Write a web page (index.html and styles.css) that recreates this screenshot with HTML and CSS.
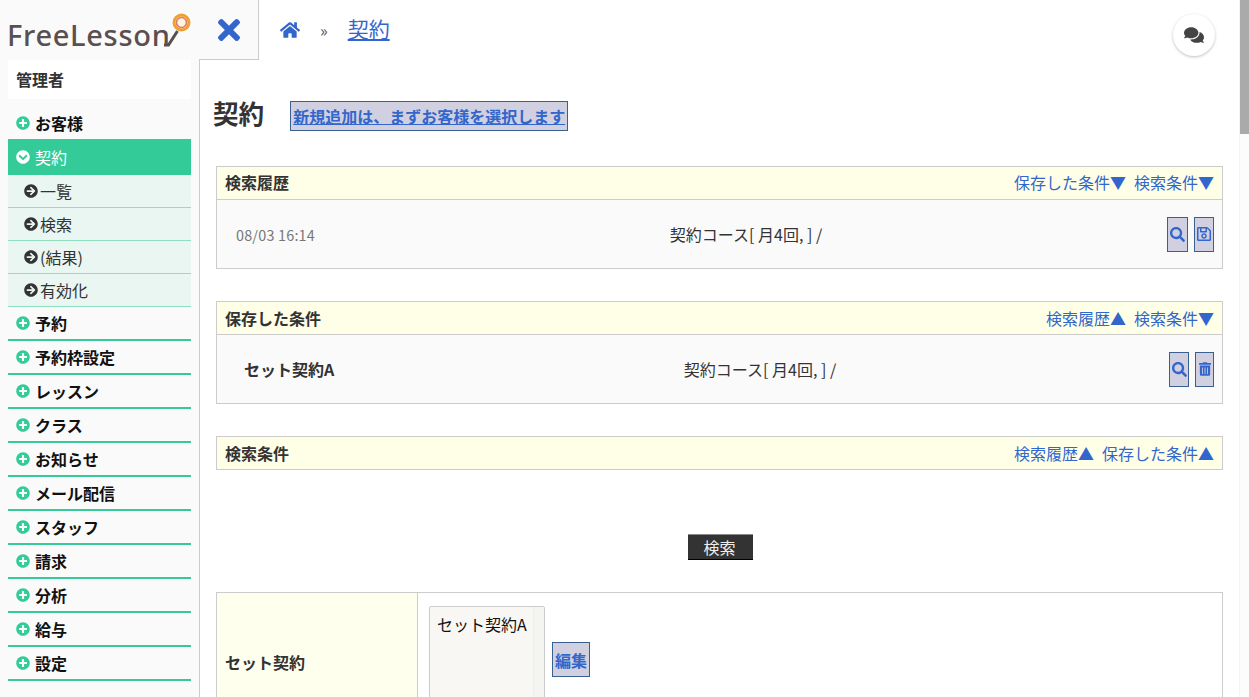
FILE: index.html
```html
<!DOCTYPE html>
<html lang="ja">
<head>
  <meta charset="UTF-8" />
  <title>FreeLesson 契約</title>
  <link rel="stylesheet" href="styles.css">
</head>
<body>
  <svg class="icon-defs" xmlns="http://www.w3.org/2000/svg">
    <symbol id="i-times" viewBox="0 0 352 512"><path d="M242.72 256l100.07-100.07c12.28-12.28 12.28-32.19 0-44.48l-22.24-22.24c-12.28-12.28-32.19-12.28-44.48 0L176 189.28 75.93 89.21c-12.28-12.28-32.19-12.28-44.48 0L9.21 111.45c-12.28 12.28-12.28 32.19 0 44.48L109.28 256 9.21 356.07c-12.28 12.28-12.28 32.19 0 44.48l22.24 22.24c12.28 12.28 32.2 12.28 44.48 0L176 322.72l100.07 100.07c12.28 12.28 32.2 12.28 44.48 0l22.24-22.24c12.28-12.28 12.28-32.19 0-44.48L242.72 256z"/></symbol>
    <symbol id="i-home" viewBox="0 0 576 512"><path d="M280.37 148.26L96 300.11V464a16 16 0 0 0 16 16l112.06-.29a16 16 0 0 0 15.92-16V368a16 16 0 0 1 16-16h64a16 16 0 0 1 16 16v95.64a16 16 0 0 0 16 16.05L464 480a16 16 0 0 0 16-16V300L295.67 148.26a12.19 12.19 0 0 0-15.3 0zM571.6 251.47L488 182.56V44.05a12 12 0 0 0-12-12h-56a12 12 0 0 0-12 12v72.61L318.47 43a48 48 0 0 0-61 0L4.34 251.47a12 12 0 0 0-1.6 16.9l25.5 31A12 12 0 0 0 45.15 301l235.22-193.74a12.19 12.19 0 0 1 15.3 0L530.9 301a12 12 0 0 0 16.9-1.6l25.5-31a12 12 0 0 0-1.7-16.93z"/></symbol>
    <symbol id="i-plus" viewBox="0 0 512 512"><path d="M256 8C119 8 8 119 8 256s111 248 248 248 248-111 248-248S393 8 256 8zm144 276c0 6.6-5.4 12-12 12h-92v92c0 6.6-5.4 12-12 12h-56c-6.6 0-12-5.4-12-12v-92h-92c-6.6 0-12-5.4-12-12v-56c0-6.6 5.4-12 12-12h92v-92c0-6.6 5.4-12 12-12h56c6.6 0 12 5.4 12 12v92h92c6.6 0 12 5.4 12 12v56z"/></symbol>
    <symbol id="i-down" viewBox="0 0 512 512"><path d="M504 256c0 137-111 248-248 248S8 393 8 256 119 8 256 8s248 111 248 248zM273 369.9l135.5-135.5c9.4-9.4 9.4-24.6 0-33.9l-17-17c-9.4-9.4-24.6-9.4-33.9 0L256 285.1 154.4 183.5c-9.4-9.4-24.6-9.4-33.9 0l-17 17c-9.4 9.4-9.4 24.6 0 33.9L239 369.9c9.4 9.4 24.6 9.4 34 0z"/></symbol>
    <symbol id="i-right" viewBox="0 0 512 512"><path d="M256 8c137 0 248 111 248 248S393 504 256 504 8 393 8 256 119 8 256 8zm-28.9 143.6l75.5 72.4H120c-13.3 0-24 10.7-24 24v16c0 13.3 10.7 24 24 24h182.6l-75.5 72.4c-9.7 9.3-9.9 24.8-.4 34.3l11 10.9c9.4 9.4 24.6 9.4 33.9 0L404.3 273c9.4-9.4 9.4-24.6 0-33.9L271.6 106.3c-9.4-9.4-24.6-9.4-33.9 0l-11 10.9c-9.5 9.6-9.3 25.1.4 34.4z"/></symbol>
    <symbol id="i-search" viewBox="0 0 512 512"><path d="M505 442.7L405.3 343c-4.5-4.5-10.6-7-17-7H372c27.6-35.3 44-79.7 44-128C416 93.1 322.9 0 208 0S0 93.1 0 208s93.1 208 208 208c48.3 0 92.7-16.4 128-44v16.3c0 6.4 2.5 12.5 7 17l99.7 99.7c9.4 9.4 24.6 9.4 33.9 0l28.3-28.3c9.4-9.4 9.4-24.6.1-34zM208 336c-70.7 0-128-57.2-128-128 0-70.7 57.2-128 128-128 70.7 0 128 57.2 128 128 0 70.7-57.2 128-128 128z"/></symbol>
    <symbol id="i-save" viewBox="0 0 448 512"><path d="M433.941 129.941l-83.882-83.882A48 48 0 0 0 316.118 32H48C21.49 32 0 53.49 0 80v352c0 26.51 21.49 48 48 48h352c26.51 0 48-21.49 48-48V163.882a48 48 0 0 0-14.059-33.941zM272 80v80H144V80h128zm122 352H54a6 6 0 0 1-6-6V86a6 6 0 0 1 6-6h42v104c0 13.255 10.745 24 24 24h176c13.255 0 24-10.745 24-24V83.882l78.243 78.243a6 6 0 0 1 1.757 4.243V426a6 6 0 0 1-6 6zM224 232c-48.523 0-88 39.477-88 88s39.477 88 88 88 88-39.477 88-88-39.477-88-88-88zm0 128c-22.056 0-40-17.944-40-40s17.944-40 40-40 40 17.944 40 40-17.944 40-40 40z"/></symbol>
    <symbol id="i-trash" viewBox="0 0 448 512"><path d="M32 464a48 48 0 0 0 48 48h288a48 48 0 0 0 48-48V128H32zm272-256a16 16 0 0 1 32 0v224a16 16 0 0 1-32 0zm-96 0a16 16 0 0 1 32 0v224a16 16 0 0 1-32 0zm-96 0a16 16 0 0 1 32 0v224a16 16 0 0 1-32 0zM432 32H312l-9.4-18.7A24 24 0 0 0 281.1 0H166.8a23.72 23.72 0 0 0-21.4 13.3L136 32H16A16 16 0 0 0 0 48v32a16 16 0 0 0 16 16h416a16 16 0 0 0 16-16V48a16 16 0 0 0-16-16z"/></symbol>
    <symbol id="i-comments" viewBox="0 0 576 512"><path d="M416 192c0-88.4-93.1-160-208-160S0 103.6 0 192c0 34.3 14.1 65.9 38 92-13.4 30.2-35.5 54.2-35.8 54.5-2.2 2.3-2.8 5.7-1.5 8.7S4.8 352 8 352c36.6 0 66.9-12.3 88.7-25 32.2 15.7 70.3 25 111.3 25 114.9 0 208-71.6 208-160zm122 220c23.9-26 38-57.7 38-92 0-66.9-53.5-124.2-129.3-148.1.9 6.6 1.3 13.3 1.3 20.1 0 105.9-107.7 192-240 192-10.8 0-21.3-.8-31.7-1.9C207.8 439.6 281.8 480 368 480c41 0 79.1-9.2 111.3-25 21.8 12.7 52.1 25 88.7 25 3.2 0 6.1-1.9 7.3-4.8 1.3-2.9.7-6.3-1.5-8.7-.3-.3-22.4-24.2-35.8-54.5z"/></symbol>
  </svg>

  <!-- Sidebar -->
  <aside class="sidebar">
    <div class="logo">
      <span class="logo-text">FreeLesson</span>
      <svg class="logo-mark" viewBox="0 0 40 40" width="40" height="40">
        <path d="M11 34 L15.5 34 L24.5 20" fill="none" stroke="#5a4f4f" stroke-width="3"/>
        <circle cx="28.5" cy="11.5" r="7.5" fill="#fdf0d8" stroke="#f0a030" stroke-width="3"/>
        <circle cx="28.5" cy="11.5" r="5" fill="#fdf3e0" stroke="#d97a6c" stroke-width="1.6"/>
      </svg>
    </div>
    <div class="side-body">
      <div class="user-box">管理者</div>
      <ul class="menu">
        <li class="menu-item"><svg class="menu-icon"><use href="#i-plus"/></svg>お客様</li>
        <li class="menu-item active"><svg class="menu-icon"><use href="#i-down"/></svg>契約</li>
        <li class="sub-item"><svg class="sub-icon"><use href="#i-right"/></svg>一覧</li>
        <li class="sub-item"><svg class="sub-icon"><use href="#i-right"/></svg>検索</li>
        <li class="sub-item"><svg class="sub-icon"><use href="#i-right"/></svg>(結果)</li>
        <li class="sub-item"><svg class="sub-icon"><use href="#i-right"/></svg>有効化</li>
        <li class="menu-item"><svg class="menu-icon"><use href="#i-plus"/></svg>予約</li>
        <li class="menu-item"><svg class="menu-icon"><use href="#i-plus"/></svg>予約枠設定</li>
        <li class="menu-item"><svg class="menu-icon"><use href="#i-plus"/></svg>レッスン</li>
        <li class="menu-item"><svg class="menu-icon"><use href="#i-plus"/></svg>クラス</li>
        <li class="menu-item"><svg class="menu-icon"><use href="#i-plus"/></svg>お知らせ</li>
        <li class="menu-item"><svg class="menu-icon"><use href="#i-plus"/></svg>メール配信</li>
        <li class="menu-item"><svg class="menu-icon"><use href="#i-plus"/></svg>スタッフ</li>
        <li class="menu-item"><svg class="menu-icon"><use href="#i-plus"/></svg>請求</li>
        <li class="menu-item"><svg class="menu-icon"><use href="#i-plus"/></svg>分析</li>
        <li class="menu-item"><svg class="menu-icon"><use href="#i-plus"/></svg>給与</li>
        <li class="menu-item"><svg class="menu-icon"><use href="#i-plus"/></svg>設定</li>
      </ul>
    </div>
  </aside>

  <!-- Main -->
  <main class="main">
    <div class="topbar">
      <div class="toggle"><svg class="toggle-icon"><use href="#i-times"/></svg></div>
      <svg class="home-icon"><use href="#i-home"/></svg>
      <span class="crumb-sep">»</span>
      <a class="crumb-link" href="#">契約</a>
      <div class="chat-btn"><svg class="chat-icon"><use href="#i-comments"/></svg></div>
    </div>

    <div class="content">
      <div class="title-row">
        <h1>契約</h1>
        <a class="btn btn-new" href="#">新規追加は、まずお客様を選択します</a>
      </div>

      <section class="panel panel-first">
        <div class="panel-head">
          <span class="panel-title">検索履歴</span>
          <a href="#">保存した条件▼</a>
          <a href="#">検索条件▼</a>
        </div>
        <div class="panel-row">
          <span class="history-date">08/03 16:14</span>
          <span class="row-text">契約コース[ 月4回, ] /</span>
          <div class="row-actions history-actions">
            <a class="btn btn-icon btn-wide" href="#"><svg class="search-icon"><use href="#i-search"/></svg></a>
            <a class="btn btn-icon" href="#"><svg class="save-icon"><use href="#i-save"/></svg></a>
          </div>
        </div>
      </section>

      <section class="panel">
        <div class="panel-head">
          <span class="panel-title">保存した条件</span>
          <a href="#">検索履歴▲</a>
          <a href="#">検索条件▼</a>
        </div>
        <div class="panel-row">
          <span class="saved-name">セット契約A</span>
          <span class="row-text">契約コース[ 月4回, ] /</span>
          <div class="row-actions saved-actions">
            <a class="btn btn-icon" href="#"><svg class="search-icon"><use href="#i-search"/></svg></a>
            <a class="btn btn-icon btn-narrow" href="#"><svg class="trash-icon"><use href="#i-trash"/></svg></a>
          </div>
        </div>
      </section>

      <section class="panel">
        <div class="panel-head">
          <span class="panel-title">検索条件</span>
          <a href="#">検索履歴▲</a>
          <a href="#">保存した条件▲</a>
        </div>
      </section>

      <div class="search-row"><button class="search-btn">検索</button></div>

      <div class="form-table">
        <div class="form-label">セット契約</div>
        <div class="form-value">
          <div class="list-box">
            <div class="list-text">セット契約A</div>
            <div class="list-scroll"></div>
          </div>
          <a class="btn btn-edit" href="#">編集</a>
        </div>
      </div>
    </div>
  </main>

  <!-- Scrollbar -->
  <div class="scrollbar"><div class="scroll-thumb"></div></div>
</body>
</html>
```

FILE: styles.css
```css
/* Global */
* {
  margin: 0;
  padding: 0;
  box-sizing: border-box;
}

body {
  display: flex;
  height: 697px;
  overflow: hidden;
  background-color: white;
  color: #333;
  font-family: "Noto Sans CJK JP", "Noto Sans", sans-serif;
  font-size: 16px;
}

a {
  color: #3366cc;
}

.icon-defs {
  display: none;
}

/* Sidebar */
.sidebar {
  width: 200px;
  flex: none;
  display: flex;
  flex-direction: column;
  background-color: #fafafa;
}

.logo {
  position: relative;
  height: 60px;
  padding: 15px 0 0 7px;
}

.logo-text {
  font-family: "Noto Sans", sans-serif;
  font-size: 29px;
  font-weight: 500;
  line-height: 40px;
  letter-spacing: 0.7px;
  color: #5a4f4f;
}

.logo-mark {
  position: absolute;
  left: 153px;
  top: 11px;
}

.side-body {
  flex: 1;
  padding: 0 8px;
  border-right: 1px solid #ccc;
}

.user-box {
  height: 39px;
  padding-left: 8px;
  margin-bottom: 8px;
  background-color: white;
  font-weight: bold;
  line-height: 39px;
}

.menu {
  list-style: none;
}

.menu-item {
  display: flex;
  align-items: center;
  gap: 5px;
  height: 34px;
  padding-left: 8px;
  border-bottom: 2px solid #33cc99;
  color: #111;
  font-weight: bold;
}

.menu-item.active {
  background-color: #33cc99;
  color: white;
  font-weight: normal;
}

.menu-icon {
  width: 14px;
  height: 14px;
  fill: #33cc99;
}

.active .menu-icon {
  fill: white;
}

.sub-item {
  display: flex;
  align-items: center;
  gap: 2px;
  height: 33px;
  padding-left: 16px;
  background-color: #e9f6f1;
  border-bottom: 1px solid #8fe0c0;
}

.sub-icon {
  width: 14px;
  height: 14px;
  fill: #333;
}

/* Top bar */
.main {
  width: 1039px;
  flex: none;
}

.topbar {
  display: flex;
  align-items: center;
  height: 60px;
}

.toggle {
  display: flex;
  align-items: center;
  justify-content: center;
  width: 60px;
  height: 60px;
  margin-left: -1px;
  background-color: #fafafa;
  border-right: 1px solid #ccc;
  border-bottom: 1px solid #ccc;
}

.toggle-icon {
  width: 22px;
  height: 32px;
  fill: #3366cc;
}

.home-icon {
  width: 20px;
  height: 18px;
  margin: 0 0 0 21px;
  fill: #3366cc;
  align-self: flex-start;
  margin-top: 21px;
}

.crumb-sep {
  margin-left: 20px;
  font-size: 16px;
  color: #555;
}

.crumb-link {
  margin: 0 0 4px 20px;
  font-size: 21px;
}

.chat-btn {
  display: flex;
  align-items: center;
  justify-content: center;
  width: 42px;
  height: 42px;
  margin: 10px 24px 0 auto;
  background-color: white;
  border-radius: 50%;
  box-shadow: 0 1px 3px rgba(0,0,0,0.25);
}

.chat-icon {
  width: 20px;
  height: 18px;
  fill: #444;
}

/* Main content */
.content {
  padding: 41px 16px 0;
}

.title-row {
  display: flex;
  align-items: center;
  gap: 26px;
  height: 30px;
  margin-bottom: 35px;
}

h1 {
  margin: -6px 0 0 -3px;
  font-size: 25.6px;
  line-height: 30px;
}

.btn {
  display: flex;
  align-items: center;
  justify-content: center;
  background-color: #d0d0e0;
  border: 1px solid #3a6090;
  font-weight: bold;
}

.btn-new {
  height: 30px;
  padding: 0 2px;
}

/* Panels */
.panel {
  margin-bottom: 32px;
  border: 1px solid #ccc;
}

.panel-head {
  display: flex;
  align-items: center;
  gap: 8px;
  height: 32px;
  padding: 0 8px;
  background-color: #ffffe8;
}

.panel-first .panel-head {
  padding-bottom: 2px;
}

.panel-head a {
  text-decoration: none;
}

.panel-title {
  margin-right: auto;
  font-weight: bold;
}

.panel-row {
  display: flex;
  align-items: center;
  height: 69px;
  background-color: #fafafa;
  border-top: 1px solid #ccc;
}

.history-date {
  width: 108px;
  padding-left: 19px;
  font-size: 14.4px;
  letter-spacing: 0.2px;
  color: #777;
}

.saved-name {
  width: 134px;
  padding-left: 27px;
  font-weight: bold;
}

.row-text {
  flex: 1;
  text-align: center;
}

.row-actions {
  display: flex;
}

.history-actions {
  width: 55px;
  gap: 6px;
}

.saved-actions {
  width: 53px;
  gap: 6px;
}

.btn-icon {
  width: 20px;
  height: 35px;
}

.btn-wide {
  width: 21px;
}

.btn-narrow {
  width: 19px;
}

.search-icon {
  width: 15px;
  height: 15px;
  fill: #3366cc;
}

.save-icon {
  width: 14px;
  height: 16px;
  fill: #3366cc;
}

.trash-icon {
  width: 12px;
  height: 14px;
  fill: #3366cc;
}

/* Search button */
.search-row {
  display: flex;
  justify-content: center;
  margin: 64px 0 32px;
  padding-left: 2px;
}

.search-btn {
  width: 65px;
  height: 26px;
  padding-right: 2px;
  background-color: #333;
  color: #eee;
  border: none;
  border-top: 1px solid #888;
  border-bottom: 1px solid #000;
  font-family: inherit;
  font-size: 16px;
  line-height: 22px;
}

/* Form table */
.form-table {
  display: flex;
  height: 140px;
  border: 1px solid #ccc;
}

.form-label {
  display: flex;
  align-items: center;
  width: 201px;
  padding-left: 8px;
  background-color: #ffffee;
  border-right: 1px solid #ccc;
  font-weight: bold;
}

.form-value {
  display: flex;
  align-items: center;
  gap: 7px;
  padding-left: 11px;
}

.list-box {
  display: flex;
  width: 116px;
  height: 112px;
  background-color: #f8f7f4;
  border: 1px solid #ccc;
  border-radius: 2px;
  color: #111;
}

.list-text {
  flex: 1;
  padding: 5px 0 0 7px;
  white-space: nowrap;
}

.list-scroll {
  width: 11px;
  background-color: #f4f4f2;
  border-left: 1px solid #eee;
}

.btn-edit {
  width: 38px;
  height: 35px;
  margin-bottom: 5px;
  text-decoration: none;
}

/* Scrollbar */
.scrollbar {
  width: 10px;
  flex: none;
  background-color: #fcfcfc;
  border-left: 1px solid #f4f4f4;
}

.scroll-thumb {
  height: 134px;
  background-color: #aaa;
}
```
